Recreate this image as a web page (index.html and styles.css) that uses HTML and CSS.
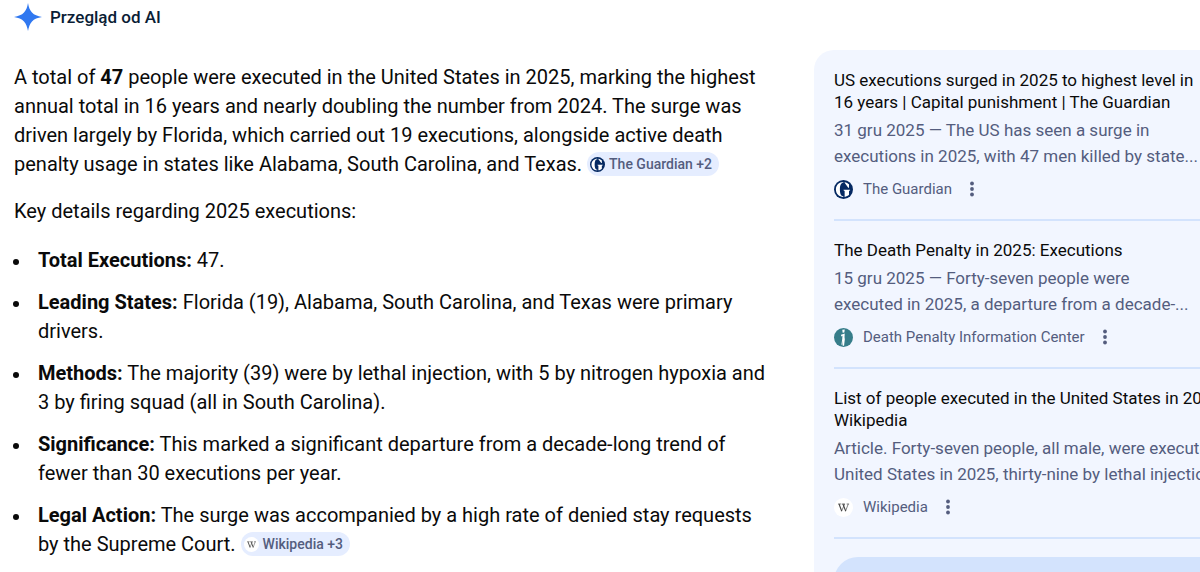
FILE: index.html
```html
<!DOCTYPE html>
<html lang="pl">
<head>
<meta charset="utf-8">
<meta name="viewport" content="width=device-width, initial-scale=1">
<title>Przegląd od AI</title>
<link rel="stylesheet" href="styles.css">
</head>
<body>
<svg class="defs" aria-hidden="true">
  <symbol id="guardian" viewBox="0 0 20 20">
    <circle cx="10" cy="10" r="10" fill="#052962"/>
    <path fill="#fff" d="M9.8 2.2C5.300 2.200 2 5.500 2 10s3.300 7.800 7.800 7.800v-.8C7.400 17 6.200 14.500 6.200 10s1.200-7 3.600-7zM11.200 2.300c1.800.300 3.600 1.300 4.600 2.300v3.500h-.8L11.200 3zM10 10.200h7v.700l-1.200.700v4c-.9.900-2.800 1.900-4.600 2.200v-6.200L10 10.900z"/>
  </symbol>
  <symbol id="dpic" viewBox="0 0 20 20">
    <circle cx="10" cy="10" r="10" fill="#367d8a"/>
    <path fill="#fff" d="M8.700 1.800l2.600-.2-.4 3.200-1.800.3zM7.400 7l3.900-1.200-.2 3.900.3 2.100-.8 6.800-1.500.1.400-5.800-.8 4.600H7.800l.9-6.100.2-3.300-1.300.8z"/>
  </symbol>
  <symbol id="wiki" viewBox="0 0 20 20">
    <circle cx="10" cy="10" r="10" fill="#fff"/>
    <path fill="none" stroke="#444" stroke-width=".7" d="M4.200 6.300h3.400M8.300 6.300h3.300M13.300 6.300h2.600M11.200 6.300L7.900 14M15 6.300L12.100 14"/>
    <path fill="none" stroke="#444" stroke-width="1.200" d="M5.300 6.300L8.100 13.800M9.400 6.300l2.900 7.500"/>
  </symbol>
  <symbol id="dots" viewBox="0 0 4 16">
    <circle cx="2" cy="2.500" r="1.900"/><circle cx="2" cy="8" r="1.900"/><circle cx="2" cy="13.500" r="1.900"/>
  </symbol>
</svg>
<header class="header">
  <svg class="spark" viewBox="0 0 28 28" aria-hidden="true"><path fill="#3078f0" d="M14 0c.8 4.200 1.700 7 4 9.600 2.300 2.500 5.500 3.600 10 4.400-4.500.8-7.700 1.900-10 4.400-2.300 2.600-3.200 5.400-4 9.600-.8-4.200-1.700-7-4-9.600C7.700 15.900 4.500 14.800 0 14c4.500-.8 7.700-1.900 10-4.400C12.300 7 13.200 4.200 14 0z"/></svg>
  <h1 class="heading">Przegląd od AI</h1>
</header>
<div class="layout">
  <main class="answer">
    <p class="para">A total of <strong>47</strong> people were executed in the United States in 2025, marking the highest<br>annual total in 16 years and nearly doubling the number from 2024. The surge was<br>driven largely by Florida, which carried out 19 executions, alongside active death<br>penalty usage in states like Alabama, South Carolina, and Texas. <button class="chip" type="button"><svg class="chip-icon" aria-hidden="true"><use href="#guardian"/></svg>The Guardian +2</button></p>
    <p class="para">Key details regarding 2025 executions:</p>
    <ul class="facts">
      <li><strong>Total Executions:</strong> 47.</li>
      <li><strong>Leading States:</strong> Florida (19), Alabama, South Carolina, and Texas were primary<br>drivers.</li>
      <li><strong>Methods:</strong> The majority (39) were by lethal injection, with 5 by nitrogen hypoxia and<br>3 by firing squad (all in South Carolina).</li>
      <li><strong>Significance:</strong> This marked a significant departure from a decade-long trend of<br>fewer than 30 executions per year.</li>
      <li><strong>Legal Action:</strong> The surge was accompanied by a high rate of denied stay requests<br>by the Supreme Court. <button class="chip" type="button"><svg class="chip-icon" aria-hidden="true"><use href="#wiki"/></svg>Wikipedia +3</button></li>
    </ul>
  </main>
  <aside class="sources">
    <article class="source">
      <a class="title" href="#">US executions surged in 2025 to highest level in<br>16 years | Capital punishment | The Guardian</a>
      <p class="snippet">31 gru 2025 — The US has seen a surge in<br>executions in 2025, with 47 men killed by state...</p>
      <div class="origin"><svg class="origin-icon" aria-hidden="true"><use href="#guardian"/></svg><span>The Guardian</span><button class="more" type="button" aria-label="Więcej"><svg class="dots" aria-hidden="true"><use href="#dots"/></svg></button></div>
    </article>
    <article class="source">
      <a class="title" href="#">The Death Penalty in 2025: Executions</a>
      <p class="snippet">15 gru 2025 — Forty-seven people were<br>executed in 2025, a departure from a decade-...</p>
      <div class="origin"><svg class="origin-icon" aria-hidden="true"><use href="#dpic"/></svg><span>Death Penalty Information Center</span><button class="more" type="button" aria-label="Więcej"><svg class="dots" aria-hidden="true"><use href="#dots"/></svg></button></div>
    </article>
    <article class="source">
      <a class="title" href="#">List of people executed in the United States in 2025 -<br>Wikipedia</a>
      <p class="snippet">Article. Forty-seven people, all male, were executed in the<br>United States in 2025, thirty-nine by lethal injection</p>
      <div class="origin"><svg class="origin-icon" aria-hidden="true"><use href="#wiki"/></svg><span>Wikipedia</span><button class="more" type="button" aria-label="Więcej"><svg class="dots" aria-hidden="true"><use href="#dots"/></svg></button></div>
    </article>
    <button class="show-all" type="button" aria-label="Pokaż wszystko"></button>
  </aside>
</div>
</body>
</html>
```

FILE: styles.css
```css
* {
  box-sizing: border-box;
}

body {
  margin: 0;
  overflow: hidden;
  background: #fff;
  color: #0a0a0a;
  font-family: Roboto, "Liberation Sans", sans-serif;
  font-size: 20px;
  line-height: 29px;
}

button {
  border: 0;
  font: inherit;
  cursor: pointer;
}

.defs {
  position: absolute;
  width: 0;
  height: 0;
}

.header {
  display: flex;
  align-items: center;
  gap: 8px;
  padding: 3px 14px 0;
}

.spark {
  width: 28px;
  height: 28px;
}

.heading {
  margin: 0;
  color: #0a1d35;
  font-size: 17px;
  font-weight: 500;
  line-height: 28px;
}

.layout {
  display: grid;
  grid-template-columns: minmax(0, 2fr) minmax(0, 1fr);
  gap: 42px;
  padding-top: 19px;
  white-space: nowrap;
}

.answer {
  padding: 13px 0 0 14px;
}

.para {
  margin: 0 0 18px;
}

.facts {
  display: grid;
  gap: 13px;
  margin: 0;
  padding: 2px 0 0 24px;
  list-style: none;
}

.facts li::before {
  content: "";
  display: inline-block;
  width: 6px;
  height: 6px;
  margin: 0 19px 0 -25px;
  border-radius: 50%;
  background: #0a0a0a;
  vertical-align: middle;
}

.facts strong,
.para strong {
  font-weight: 700;
}

.chip {
  display: inline-flex;
  align-items: center;
  gap: 4px;
  height: 24px;
  padding: 0 7px 0 3px;
  border-radius: 12px;
  background: #e5edff;
  color: #545d7e;
  font-size: 14px;
  font-weight: 500;
  line-height: 24px;
  vertical-align: text-bottom;
}

.chip-icon {
  width: 15px;
  height: 15px;
}

.sources {
  padding: 19px 0 0 20px;
  border-top-left-radius: 20px;
  background: #f2f6ff;
  font-size: 17px;
}

.source {
  margin-bottom: 18px;
  padding-bottom: 20px;
  border-bottom: 2px solid #d3e3fd;
}

.title {
  display: block;
  color: #0a0a0a;
  line-height: 22px;
  text-decoration: none;
}

.snippet {
  margin: 4px 0 10px;
  color: #545d7e;
  line-height: 26px;
}

.origin {
  display: flex;
  align-items: center;
  height: 20px;
  color: #545d7e;
  font-size: 15px;
}

.origin-icon {
  width: 19px;
  height: 19px;
  margin-right: 10px;
}

.more {
  display: flex;
  padding: 0 18px;
  background: none;
}

.dots {
  width: 4px;
  height: 16px;
  fill: #545d7e;
}

.show-all {
  display: block;
  width: 100%;
  height: 48px;
  border-radius: 24px 0 0 24px;
  background: #d3e3fd;
}
```
